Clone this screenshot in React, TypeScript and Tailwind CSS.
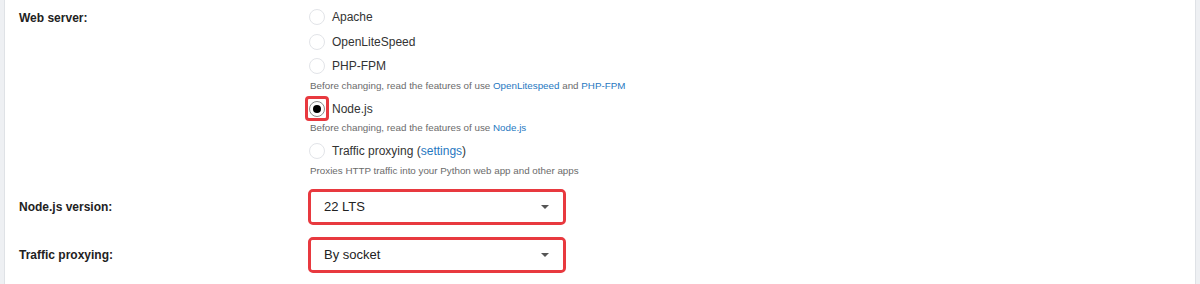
const font = { fontFamily: '"Liberation Sans", Arial, sans-serif' };

const Radio = ({ checked = false, marked = false }: { checked?: boolean; marked?: boolean }) => (
  <span
    className={`flex h-[25px] w-[24px] items-center justify-center rounded-[4px] border-[3px] ${
      marked ? "border-[#e8393f]" : "border-transparent"
    }`}
  >
    <span
      className={`flex h-[16px] w-[16px] items-center justify-center rounded-full border bg-white ${
        checked ? "border-[#8a8a8a]" : "border-[#e2e4e8]"
      }`}
    >
      {checked && <span className="h-[8px] w-[8px] rounded-full bg-black" />}
    </span>
  </span>
);

const Option = ({
  label,
  checked,
  marked,
  className = "",
}: {
  label: React.ReactNode;
  checked?: boolean;
  marked?: boolean;
  className?: string;
}) => (
  <div className={`flex h-[25px] items-center gap-[3px] text-[12px] text-[#333] ${className}`}>
    <Radio checked={checked} marked={marked} />
    <span>{label}</span>
  </div>
);

const Hint = ({ children, className = "" }: { children: React.ReactNode; className?: string }) => (
  <p className={`h-[14px] pl-[5px] text-[9.8px] leading-[14px] text-[#6b6b6b] ${className}`}>{children}</p>
);

const Link = ({ children }: { children: React.ReactNode }) => (
  <a className="text-[#1f78c1]">{children}</a>
);

const Select = ({ value }: { value: string }) => (
  <div className="ml-[3px] w-[258px] rounded-[5px] border-[3px] border-[#e8393f]">
    <div className="flex h-[30px] items-center justify-between rounded-[2px] bg-white pl-[13px] pr-[14px] text-[13px] text-[#222]">
      <span>{value}</span>
      <svg width="8" height="4" viewBox="0 0 8 4">
        <path d="M0 0h8L4 4z" fill="#555" />
      </svg>
    </div>
  </div>
);

export default function App() {
  return (
    <div className="h-[284px] w-[1200px] bg-[#eef0f3] pl-[4px] pr-[4px]" style={font}>
      <div className="h-full border-l border-r border-[#dfe2e6] bg-white">
        <div className="flex">
          <div className="w-[300px] pl-[14px] pt-[9px] text-[12px] font-bold text-[#222]">Web server:</div>
          <div className="flex flex-col pt-[4px]">
            <Option label="Apache" />
            <Option label="OpenLiteSpeed" />
            <Option label="PHP-FPM" className="mt-[-1px]" />
            <Hint className="mt-[1px]">
              Before changing, read the features of use <Link>OpenLitespeed</Link> and <Link>PHP-FPM</Link>
            </Hint>
            <Option label="Node.js" checked marked className="mt-[3px]" />
            <Hint>
              Before changing, read the features of use <Link>Node.js</Link>
            </Hint>
            <Option
              label={
                <>
                  Traffic proxying (<Link>settings</Link>)
                </>
              }
              className="mt-[3px]"
            />
            <Hint className="mt-[1px]">Proxies HTTP traffic into your Python web app and other apps</Hint>
          </div>
        </div>
        <div className="mt-[11px] flex items-center">
          <div className="w-[300px] pl-[14px] text-[12px] font-bold text-[#222]">Node.js version:</div>
          <Select value="22 LTS" />
        </div>
        <div className="mt-[12px] flex items-center">
          <div className="w-[300px] pl-[14px] text-[12px] font-bold text-[#222]">Traffic proxying:</div>
          <Select value="By socket" />
        </div>
      </div>
    </div>
  );
}
